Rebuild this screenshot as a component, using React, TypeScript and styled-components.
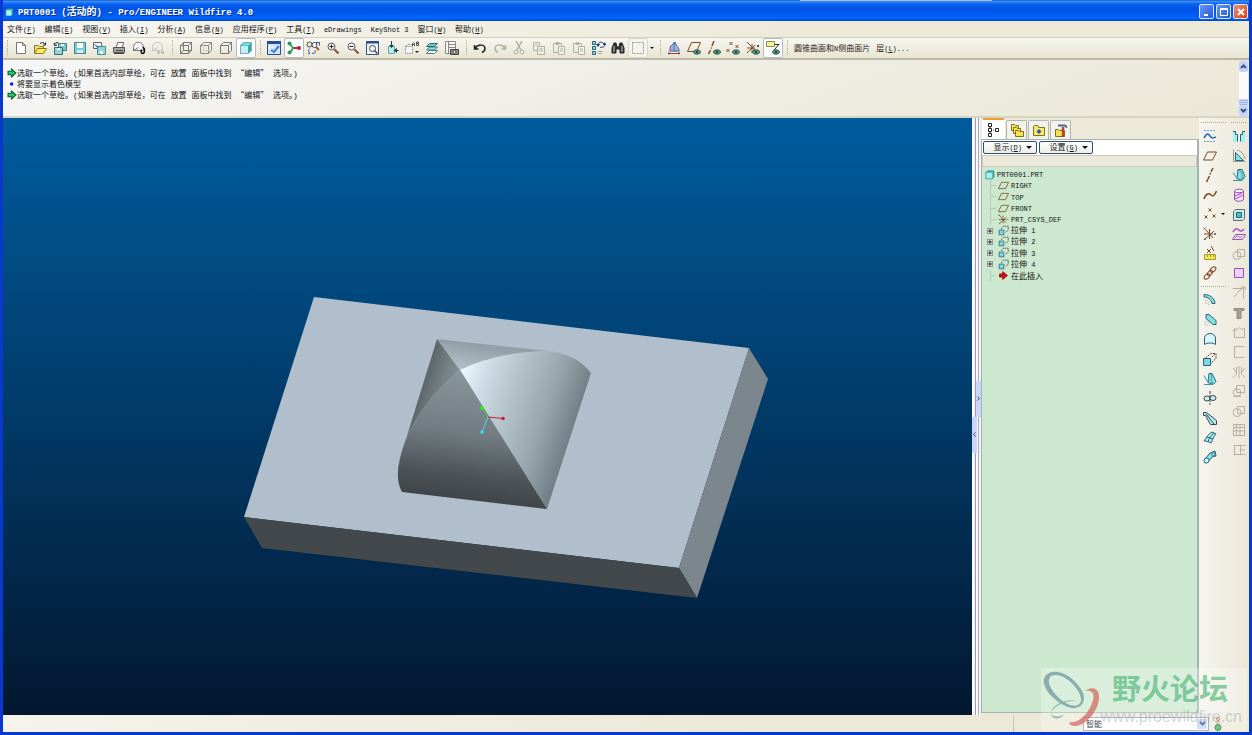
import React, { Fragment, ReactNode } from "react";
import styled, { createGlobalStyle, css } from "styled-components";

const uiFont = `"Noto Sans CJK SC", "Liberation Sans", sans-serif`;
const monoFont = `"Liberation Mono", "Noto Sans CJK SC", monospace`;

const GlobalStyle = createGlobalStyle`
  *, *::before, *::after { box-sizing: border-box; }
  body { margin: 0; font: 8px/11px ${uiFont}; color: #111; }
  button { font: inherit; color: inherit; padding: 0; margin: 0; border: 0; background: none; }
  ul { list-style: none; margin: 0; padding: 0; }
`;

/* ---------- text ---------- */

const Latin = styled.span<{ $size: number }>`
  font-family: ${monoFont};
  font-size: ${(p) => p.$size}px;
  white-space: pre;
`;

function Mixed({ text, size = 7 }: { text: string; size?: number }) {
  return (
    <>
      {text.split(/([\x20-\x7e]+)/).map((part, i) =>
        i % 2 ? (
          <Latin key={i} $size={size}>
            {part}
          </Latin>
        ) : (
          <Fragment key={i}>{part}</Fragment>
        )
      )}
    </>
  );
}

function Mnemonic({ text, letter }: { text: string; letter?: string }) {
  return (
    <>
      <Mixed text={text} />
      {letter && (
        <Latin $size={7}>
          (<u>{letter}</u>)
        </Latin>
      )}
    </>
  );
}

/* ---------- icons, drawn on a 14 x 14 grid ---------- */

const teal = "#7fe3e3";
const ink = "#2b6478";
const brown = "#7b4a22";
const grey = "#b4b1a4";
const purple = "#a04cc0";

const cross = (x: number, y: number, r = 1.5) => `M${x - r} ${y - r}l${2 * r} ${2 * r}m0 ${-2 * r}l${-2 * r} ${2 * r}`;

const floppy = (
  <>
    <rect x="1.5" y="1.5" width="11" height="11" fill="#7cc9cf" stroke="#3f8f99" />
    <rect x="4" y="2" width="6" height="5" fill="#fff" stroke="none" />
    <rect x="4" y="9" width="6" height="3" fill="#d7eff0" stroke="none" />
  </>
);
const cube = <path d="M1.500 4.500h8v8h-8zM1.500 4.500l3-3h8l-3 3M12.500 1.500v8l-3 3" />;
const lens = (
  <>
    <circle cx="5.500" cy="5.500" r="3.500" fill="#f8f8f8" stroke="#555" />
    <path d="M8.500 8.500l4 4" stroke="#8a4a3a" strokeWidth="2" />
  </>
);
const eye = (
  <>
    <ellipse cx="10" cy="11" rx="3.500" ry="2.200" fill="#5aa08a" stroke="#2f5a50" />
    <circle cx="10" cy="11" r="1" fill="#123" stroke="none" />
  </>
);
const clipboard = (
  <>
    <path d="M1.500 2.500h8v9h-8zM4 1.500h3v2H4z" stroke={grey} />
    <path d="M6.500 5.500h6v8h-6zM8 8h3M8 10h3" fill="#f3f1e8" stroke={grey} />
  </>
);

const icons: Record<string, ReactNode> = {
  part: (
    <>
      <path d="M2.500 4.500l2-2h8v8l-2 2h-8z" fill="#4fc4cc" stroke="#256a78" />
      <path d="M3 5h7v7H3z" fill="#a8f2f2" stroke="none" />
    </>
  ),
  file: <path d="M2.500 1.500h6l3 3v8h-9zM8.500 1.500v3h3" fill="#fff" stroke="#777" />,
  open: (
    <>
      <path d="M1.500 12.500v-8h4l1 1h4v2" fill="#f3e27a" stroke="#8a7a20" />
      <path d="M1.500 12.500l3-5h9l-3 5z" fill="#ffe95e" stroke="#8a7a20" />
      <path d="M7 2.500c2-1.500 4-1 5 1m.5-2v2.500h-2.500" stroke="#222" />
    </>
  ),
  backup: (
    <>
      <path d="M5.500 2.500h8v7h-8z" fill="#7cc9cf" stroke="#3f7f8a" />
      <path d="M1.500 6.500h8v7h-8z" fill="#8ed6da" stroke="#2f6f7a" />
      <path d="M4 7h3v2H4zM8 3h3v2H8z" fill="#fff" stroke="none" />
      <path d="M1.500 4c0-2 2-3 4-2M1 2l.5 2.500L4 4" stroke="#222" />
    </>
  ),
  save: floppy,
  saveAs: (
    <>
      <path d="M1.500 1.500h8v6h-8z" fill="#eef" stroke="#666" />
      <path d="M5.500 5.500h8v8h-8z" fill="#8ed6da" stroke="#3f8f99" />
      <path d="M8 10h3v3H8z" fill="#fff" stroke="none" />
      <path d="M3 3.500l3 3" stroke="#222" />
    </>
  ),
  print: (
    <>
      <path d="M4.500 6l1-4.500h6L10.500 6" fill="#fff" stroke="#666" />
      <path d="M1.500 6.500h11v5h-11z" fill="#a9a7a0" stroke="#555" />
      <path d="M2 12.500h10M4 9.500h7" stroke="#444" />
    </>
  ),
  mail: (
    <>
      <path d="M1.500 9.500v-3c0-7 10-7 10 0v3h-10l5-3" fill="#f8f8f8" stroke="#777" />
      <path d="M10.500 6.500c2 0 2 2 2 3s0 3-2 3-1-4-1-4" stroke="#111" strokeWidth="1.500" />
    </>
  ),
  mailLink: (
    <>
      <path d="M1.500 9.500v-3c0-7 10-7 10 0v3h-10l5-3" stroke="#c6c3b8" />
      <path d="M6 11.500h3m1 0h3" stroke={grey} strokeWidth="2" />
    </>
  ),
  wire: (
    <g stroke="#777">
      {cube}
      <path d="M4.500 1.500v8h8M4.500 9.500l-3 3" />
    </g>
  ),
  hidden: (
    <g stroke="#888">
      {cube}
      <path d="M4.500 1.500v8h8M4.500 9.500l-3 3" stroke="#ccc" />
    </g>
  ),
  noHidden: <g stroke="#777">{cube}</g>,
  shaded: (
    <>
      <path d="M1.500 4.500l3-3h8v8l-3 3h-8z" fill="#36a5b0" stroke="#7ab" />
      <path d="M2 5h7v7H2z" fill="#c5f0f0" stroke="none" />
      <path d="M2 4.500l3-2.500h7L9.500 4.500z" fill="#7fdede" stroke="none" />
    </>
  ),
  repaint: (
    <>
      <path d="M0.500 0.500h13v13h-13z" fill="#cfe4fb" stroke="#2c4f86" />
      <path d="M0 0h14v3H0z" fill="#274f94" stroke="none" />
      <path d="M2 6h5M2 8h2" stroke="#fff" />
      <path d="M12 5l-5 6-3-2" stroke="#3b7dd0" strokeWidth="2" />
    </>
  ),
  spin: (
    <>
      <path d="M6 7h6" stroke="#a33" strokeWidth="2" />
      <path d="M6 7L3 3M6 7l-3 5" stroke="#3a6" strokeWidth="2" />
      <g stroke="none">
        <circle cx="2.500" cy="2.500" r="2" fill="#2a9a50" />
        <circle cx="2.500" cy="11.500" r="2" fill="#2a9a50" />
        <circle cx="12" cy="7" r="2" fill="#b02a3a" />
      </g>
    </>
  ),
  orient: (
    <>
      <circle cx="3.500" cy="3.500" r="2.500" stroke="#444" />
      <circle cx="8.500" cy="4" r="2.500" fill="#fff" stroke="#444" />
      <path d="M10 6l3 3" stroke="#946038" strokeWidth="2" />
      <path d="M10 1.500h3.500v3M4 8c-2 0-2 3 0 4l-2 1M6 12c3 1 4-1 3-3" stroke="#3050b0" />
    </>
  ),
  zoomIn: (
    <>
      {lens}
      <path d="M3.500 5.500h4M5.500 3.500v4" stroke="#222" />
    </>
  ),
  zoomOut: (
    <>
      {lens}
      <path d="M3.500 5.500h4" stroke="#222" />
    </>
  ),
  refit: (
    <>
      <path d="M0.500 0.500h12v13h-12z" fill="#eef5fb" stroke="#34507c" />
      <path d="M0 1.500h13" stroke="#274f94" strokeWidth="2" />
      <circle cx="6.500" cy="7.500" r="3" stroke="#444" />
      <path d="M8.500 9.500l3 3" stroke="#444" strokeWidth="1.500" />
    </>
  ),
  reorient: (
    <>
      <path d="M2.500 5.500h6v7h-6z" fill="#b8ecec" stroke="#6aa" />
      <path d="M5.500 0v5M11 9.500H8" stroke="#14424c" />
      <path d="M3 4h5L5.500 7zM11 7v5L7.500 9.500z" fill="#14424c" stroke="none" />
      <path d="M12.500 9.500H11" stroke="#14424c" />
    </>
  ),
  views: (
    <>
      <path d="M0.500 5.500h7v7h-7zM0.500 5.500l2-2h5" fill="#f4f4f4" stroke="#8a9aa4" strokeDasharray="2 1" />
      <path d="M7.500 5V2.500l1-1 1 1V5M7.500 3.500h2M11.500 1v3.500h2V1h-2M11.500 2.500h2" stroke="#555" />
      <path d="M10 10h4l-2 2z" fill="#222" stroke="none" />
    </>
  ),
  layers: (
    <>
      <path d="M1.500 12.500l3-3h8l-3 3z" fill="#fff" stroke="#4a7a84" />
      <path d="M1.500 9l3-3h8l-3 3z" fill="#8fe0de" stroke="#3a7a84" />
      <path d="M1.500 5.500l3-3h8l-3 3z" fill="#6ccaca" stroke="#2f6a74" />
    </>
  ),
  viewManager: (
    <>
      <path d="M0.500 0.500h10v12h-10zM3.500 0.500v12M3.500 3.500h7M3.500 6.500h7" fill="#f6f6f4" stroke="#888" />
      <path d="M5.500 8.500h8v5h-8z" fill="#888" stroke="#444" />
      <circle cx="9.500" cy="11" r="1.500" fill="#eee" />
    </>
  ),
  undo: <path d="M1.500 4v4h4M2 7.500c3-5 10-4 10 0 0 2-1 3-3 4" stroke="#222" strokeWidth="1.500" />,
  redo: <path d="M12.500 4v4h-4M12 7.500c-3-5-10-4-10 0 0 2 1 3 3 4" stroke={grey} strokeWidth="1.500" />,
  cut: (
    <g stroke={grey}>
      <path d="M4 0l5 9M10 0L5 9" strokeWidth="1.500" />
      <circle cx="4" cy="11" r="2" />
      <circle cx="10" cy="11" r="2" />
    </g>
  ),
  copy: (
    <g stroke={grey} fill="#f0eee4">
      <path d="M1.500 1.500h6v8h-6zM3 4h3" />
      <path d="M5.500 5.500h7v8h-7zM7 8h4M7 10h4" />
    </g>
  ),
  paste: clipboard,
  pasteSpecial: clipboard,
  regenerate: (
    <>
      <path d="M0.500 0.500h3v3h-3zM0.500 5.500h3v3h-3zM0.500 10.500h3v3h-3z" fill={teal} stroke={ink} />
      <path d="M6 4c0-3 4-4 6-1M13 3c0 3-3 4-5 3" stroke="#1b2f78" />
      <path d="M4 3h4L6 6zM11 4h3l-1-3z" fill="#1b2f78" stroke="none" />
      <path d="M6 10.500h5M6 12.500h4" stroke="#aaa" />
    </>
  ),
  find: (
    <>
      <path d="M1 7l2-5h2l1 4h2l1-4h2l2 5v5H9V8H5v4H1z" fill="#333" stroke="#222" />
      <path d="M3 5v6M11 5v6" stroke="#ccc" />
    </>
  ),
  select: <path d="M1.500 1.500h11v11h-11z" stroke="#999" strokeDasharray="2 1" />,
  datumSketch: (
    <>
      <path d="M3 10V6l5-5 3 9z" fill="#b4a4e4" stroke="#6a50a0" />
      <path d="M7 10V1l5 7v2z" fill="#86c4e4" stroke="#47a" />
      <path d="M1 12.500h12M2 10.500v3M12 10.500v3" stroke="#9a3a3a" />
    </>
  ),
  planeEye: (
    <>
      <path d="M4.500 1.500h9l-4 9h-9z" stroke={brown} />
      {eye}
    </>
  ),
  axisEye: (
    <>
      <path d="M7 0L5 5M4.500 6.500l-.5 1M3.500 9l-2 4" stroke={brown} strokeWidth="1.500" />
      {eye}
    </>
  ),
  pointEye: (
    <>
      <path d={cross(5, 2.5) + cross(11, 5.5) + cross(2, 9.5)} stroke={brown} />
      {eye}
    </>
  ),
  csysEye: (
    <>
      <path d="M1 1l9 9M6 3v9M1 12l8-8M1 7h8" stroke={brown} />
      <path d={cross(12, 5, 1)} stroke="#555" />
      {eye}
    </>
  ),
  noteEye: (
    <>
      <path d="M0.500 0.500h8v5h-8z" fill="#f8f09a" stroke="#8f8a4a" />
      <path d="M9 3.500h4L8 9" stroke="#222" />
      {eye}
    </>
  ),
  tree: <path d="M1.500 0.500h3v3h-3zM1.500 5.500h3v3h-3zM1.500 10.500h3v3h-3zM8.500 5.500h3v3h-3zM3 4v1M3 9v1M6 7h1" stroke="#222" fill="#fff" />,
  folders: (
    <g fill="#f5e352" stroke="#7d7320">
      <path d="M1.500 2.500v-1h3l1 1h3v5h-7z" />
      <path d="M3.500 5.500v-1h3l1 1h3v5h-7z" />
      <path d="M5.500 8.500v-1h3l1 1h4v5h-8z" />
    </g>
  ),
  favorites: (
    <>
      <path d="M1.500 12.500v-9l1-1h3l1 2h6v8z" fill="#f7ea66" stroke="#7d7320" />
      <path d="M7 6l2.500 2.500L7 11 4.500 8.500z" fill="#2a55b0" stroke="none" />
    </>
  ),
  connections: (
    <>
      <path d="M1.500 13.500v-7h3l1 1h5v6z" fill="#f5e352" stroke="#7d7320" />
      <path d="M4 2.500h7l2 2" stroke="#4a6a90" strokeWidth="2" />
      <path d="M9 4v10" stroke="#b04a2a" strokeWidth="2.500" />
    </>
  ),
  sketch: (
    <>
      <path d="M1 1.500h12M1 12.500h12" stroke="#6aa0d0" strokeDasharray="2 1" />
      <path d="M1 9c3-5 4-5 6-2s3 2 6 1" stroke="#2463c0" strokeWidth="1.500" />
    </>
  ),
  plane: <path d="M4.500 3h9l-4 8h-9z" stroke={brown} />,
  axis: <path d="M10 0L8 4M7.500 5l-.5 1.500M6.500 8L3.500 14" stroke={brown} strokeWidth="1.500" />,
  curve: <path d="M1 11c2-6 5-6 7-4s4 0 5.500-4" stroke={brown} strokeWidth="1.500" />,
  points: <path d={cross(7, 3) + cross(3, 10) + cross(11, 9)} stroke={brown} />,
  csys: (
    <>
      <path d="M2 2l8 9M6.500 2v10M2 12l9-8M1 7h9" stroke={brown} />
      <path d={cross(12, 7, 1) + cross(1.5, 1.5, 1) + cross(2, 12, 1)} stroke="#777" />
    </>
  ),
  analysis: (
    <>
      <path d={"M8 0l3 5" + cross(6, 5, 2)} stroke={brown} />
      <path d="M1.500 8.500h11v5h-11z" fill="#f2e860" stroke="#a79a20" />
      <path d="M4.500 9v2M7.500 9v2M10.500 9v2" stroke="#a79a20" />
    </>
  ),
  reference: (
    <g stroke={brown}>
      <ellipse cx="10" cy="3.500" rx="3.300" ry="2" transform="rotate(-40 10 3.500)" />
      <ellipse cx="7" cy="7" rx="3" ry="2" transform="rotate(-50 7 7)" />
      <ellipse cx="4" cy="10.500" rx="3.300" ry="2" transform="rotate(-40 4 10.500)" />
    </g>
  ),
  hole: (
    <>
      <path d="M1 2h12v11H1z" fill="#a4f0ee" stroke="none" />
      <path d="M3.500 2v3.500h2V13h3V5.500h2V2z" fill="#f2f0e6" stroke="none" />
      <path d="M1 2.500h2.500v3h2v7M13 2.500h-2.500v3h-2v7" stroke={ink} />
    </>
  ),
  rib: (
    <>
      <path d="M3.500 3.500v8h8z" fill={teal} stroke={ink} />
      <path d="M1.500 0.500v12h12M5 1c4 1 7 4 8 9" stroke="#999" />
    </>
  ),
  draftSolid: (
    <>
      <path d="M5 10.500l1-9h4l3 7-3 4z" fill={teal} stroke={ink} />
      <path d="M6 1.500l4 3v8M1 4.500l4 6M1 12.500h9" stroke="#389aa8" />
    </>
  ),
  rib2: (
    <>
      <path d="M2.500 3v8c0 3 9 3 9 0V3" fill="#f6e4fb" stroke={purple} />
      <ellipse cx="7" cy="3" rx="4.500" ry="1.800" fill="#fff" stroke={purple} />
      <path d="M3 8l7-3M3 11l8-4" stroke={purple} />
    </>
  ),
  shell: (
    <>
      <path d="M1.500 3.500l2-2h9v9l-2 2h-9z" fill="#c6eeee" stroke="#667" />
      <path d="M4.500 4.500h5v5h-5z" fill="#56b8c0" stroke={ink} />
    </>
  ),
  wrap: (
    <>
      <path d="M1 5c2-4 4-4 6-2s3 1 5-1" stroke={purple} strokeWidth="1.500" />
      <path d="M0.500 12.500l3-5h10l-3 5zM3 11c2-3 3-2 4-1s2 0 3-1" stroke={purple} />
    </>
  ),
  intersectOff: (
    <g stroke={grey}>
      <circle cx="5" cy="8.500" r="4" />
      <path d="M5.500 2.500h7v7h-7z" />
    </g>
  ),
  square: <path d="M2.500 2.500h9v9h-9z" fill="#ecd4f6" stroke={purple} />,
  cornerOff: <path d="M0.500 2.500h11v10M5 7l7-6M2 11l3-3M9 1h4v3" stroke={grey} />,
  rivet: <path d="M2 2.500h10v2H9v8H5v-8H2z" fill="#a19f96" stroke="#8e8c82" />,
  patchOff: <path d="M2.500 12.500v-9l3 1 2-2 2 2 3-1v9zM0.500 5.500h3" stroke={grey} />,
  bracketOff: <path d="M12 1.500H2.500v11H12" stroke={grey} />,
  mirrorOff: <path d="M7 1v12M4.500 2v7L1 12.500M9.500 2v7l3.500 3.500M1 3l3 4M13 3l-3 4" stroke={grey} />,
  mergeOff: (
    <g stroke={grey}>
      <circle cx="5" cy="8.500" r="3.800" />
      <path d="M4.500 1.500h8v7h-8zM2 12.500h7" />
    </g>
  ),
  gridOff: <path d="M1.500 1.500h11v11h-11zM1.500 4.500h11M1.500 8h11M4.500 1.500v11M8 1.500v11" stroke={grey} />,
  panelOff: <path d="M1.500 2.500h12M1.500 11.500h12M2.500 2.500v9M8.500 2.500v9M9 7h4" stroke={grey} />,
  sweep: (
    <>
      <path d="M1 1.500c6 0 11 4 11 9h-3C8 6 5 4 1 4z" fill={teal} stroke={ink} />
      <path d="M2 7c3 0 4 2 4 5M2 9c1 0 2 1 2 3" stroke="#aaa" strokeDasharray="1 1" />
    </>
  ),
  chamfer: (
    <>
      <path d="M3 1.500h3l7 6v4h-3l-7-6z" fill={teal} stroke={ink} />
      <path d="M2 8v4h5M4 8l3 3" stroke="#aaa" strokeDasharray="1 1" />
    </>
  ),
  surface: <path d="M1.500 12.500V6C2 0 12 0 12.500 6v6.500c-3-2-8-2-11 0z" fill="#d9f6fa" stroke={ink} />,
  extrude: (
    <>
      <path d="M0.500 6.500h7v7h-7z" fill="#7fd8e0" stroke={ink} />
      <path d="M2.500 6L8 1.500h5v5L8 11M9 5l3-3" stroke="#444" strokeDasharray="2 1" />
    </>
  ),
  revolve: (
    <>
      <path d="M5 10.500l1-9h3l4 8-3 3z" fill={teal} stroke={ink} />
      <path d="M1 3.500l4 7M1 12.500h9M9 1.500l-1 7 2 4" stroke="#389aa8" />
    </>
  ),
  sweepBlend: (
    <>
      <ellipse cx="4" cy="7.500" rx="3" ry="2.500" fill="#c8f2f2" stroke="#444" />
      <ellipse cx="10" cy="7" rx="3" ry="2.500" fill="#c8f2f2" stroke="#444" />
      <path d="M7 0v14" stroke="#444" strokeDasharray="3 1" />
    </>
  ),
  blend: <path d="M0.500 1.500h3l10 8v4h-6l-5-9h-2zM3 3l8 10" fill="#b5ecec" stroke="#345" />,
  boundary: (
    <>
      <path d="M1 11c3-4 4-7 8-9l4 2c-3 3-3 6-5 9-2-1-4-2-7-2z" fill="#a9ecee" stroke={ink} />
      <path d="M4 7l6 2M5 12c1-4 3-6 6-9" stroke={ink} />
    </>
  ),
  sweptSolid: (
    <>
      <path d="M2 9l5-6 5-2 1 5-4 1-4 5-3 1z" fill={teal} stroke={ink} />
      <circle cx="3.500" cy="10.500" r="2.500" fill="#cff" stroke={ink} />
      <circle cx="10.500" cy="4" r="1.500" fill="#fff" stroke={ink} />
    </>
  ),
  feature: (
    <>
      <path d="M1.500 6.500h6v6h-6z" fill="#7fd8e0" stroke={ink} />
      <path d="M4 5l3-3.500h6v5L10 9" stroke="#333" strokeDasharray="2 1" />
    </>
  ),
  insert: <path d="M2 5h4V2l6 5-6 5V9H2z" fill="#d01020" stroke="#900" />,
  arrow: <path d="M1.500 4.500h5V1.500l6 5.500-6 5.500v-3h-5z" fill="#27c96a" stroke="#0b5c2c" strokeWidth="1.500" />,
  dot: <circle cx="6.500" cy="7" r="2.500" fill="#1a1ae0" stroke="none" />,
  light: (
    <>
      <circle cx="7" cy="2" r="1.500" fill="#eea" stroke="#b66" />
      <circle cx="7" cy="5.500" r="1.500" fill="#eec" stroke="#b98" />
      <circle cx="7" cy="10.500" r="3" fill="#39b45c" stroke="#1c6a34" />
    </>
  ),
};

const Glyph = styled.svg<{ $size: number }>`
  width: ${(p) => p.$size}px;
  height: ${(p) => p.$size}px;
  flex: none;
  display: block;
`;

function Icon({ name, size = 14 }: { name: string; size?: number }) {
  return (
    <Glyph $size={size} viewBox="0 0 14 14" fill="none" stroke="#555" aria-hidden="true">
      {icons[name]}
    </Glyph>
  );
}

/* ---------- window frame ---------- */

const Window = styled.div`
  position: relative;
  display: flex;
  flex-direction: column;
  height: 100vh;
  overflow: hidden;
  border: solid #0838cc;
  border-width: 0 3px 3px;
  background: #ece9d8;
`;

const TitleBar = styled.header`
  position: relative;
  flex: none;
  display: flex;
  align-items: center;
  gap: 4px;
  height: 21px;
  padding: 2px 1px 0 1px;
  color: #fff;
  font-size: 10px;
  font-weight: 700;
  white-space: nowrap;
  background: linear-gradient(#0a4fa8 0, #3d92ff 1px, #0a64f0 4px, #0054e3 8px, #0058ee 13px, #0066ff 18px, #0048c8 21px);
`;

const BackEdge = styled.span`
  position: absolute;
  top: 0;
  left: 64%;
  width: 192px;
  height: 1px;
  background: #a9bccb;
`;

const Title = styled.h1`
  flex: 1;
  margin: 0;
  font-size: 10px;
  text-shadow: 1px 1px #0a318c;
`;

const Captions = styled.div`
  display: flex;
  gap: 2px;
`;

const CaptionButton = styled.button<{ $close?: boolean }>`
  display: grid;
  place-items: center;
  width: 15px;
  height: 15px;
  border: 1px solid #dbe6ff;
  border-radius: 2px;
  background: ${(p) => (p.$close ? "linear-gradient(135deg, #f09070, #d8401a)" : "linear-gradient(135deg, #6a96f4, #2256d8)")};
`;

/* ---------- menus and top toolbar ---------- */

const MenuBar = styled.nav`
  flex: none;
  display: flex;
  align-items: center;
  gap: 9px;
  height: 16px;
  padding: 0 4px;
  white-space: nowrap;
  background: linear-gradient(90deg, #f6f5f0, #ece9d8 70%);
`;

const ToolBar = styled.div`
  flex: none;
  display: flex;
  align-items: center;
  height: 23px;
  border-top: 1px solid #d3cfbe;
  border-bottom: 2px solid #bdb9a6;
  white-space: nowrap;
  background: linear-gradient(#f7f6f0, #e8e5d3);
`;

const Grip = styled.span`
  flex: none;
  width: 3px;
  height: 16px;
  margin: 0 2px 0 3px;
  background: repeating-linear-gradient(#aaa793 0 1px, transparent 1px 2px) 1px 0 / 1px 100% no-repeat;
`;

const Group = styled.div<{ $width: number }>`
  flex: none;
  display: flex;
  justify-content: space-between;
  width: ${(p) => p.$width}px;
`;

const ToolButton = styled.button<{ $look?: "on" | "framed" }>`
  display: grid;
  place-items: center;
  width: 20px;
  height: 20px;
  border: 1px solid transparent;
  border-radius: 2px;
  ${(p) => p.$look === "on" && css`border-color: #b3bac6; background: #fff;`}
  ${(p) => p.$look === "framed" && css`border-color: #dcd9cb; background: #f4f3ec;`}
`;

const Drop = styled.button`
  width: 8px;
  height: 18px;
  display: grid;
  place-items: center;
`;

const Caret = styled.i`
  border: solid transparent;
  border-width: 3px 3px 0;
  border-top-color: #111;
`;

const SmallCaret = styled(Caret)`
  border-width: 2px 2px 0;
`;

const TextButton = styled.button`
  padding: 0 3px;
  color: #2b1512;
`;

/* ---------- message area ---------- */

const Messages = styled.section`
  flex: none;
  display: flex;
  height: 58px;
  border-bottom: 2px solid #d8d4c2;
  background: linear-gradient(160deg, #f6f6f6, #efeee6 50%, #ebe8d6);
`;

const MessageList = styled.ul`
  flex: 1;
  padding: 7px 4px;
`;

const Message = styled.li`
  display: flex;
  align-items: center;
  height: 11px;
  white-space: nowrap;
`;

const Scroller = styled.div`
  display: flex;
  flex-direction: column;
  width: 9px;
  margin: 1px 1px 0 0;
  background: #fbfbfc;
`;

const ScrollButton = styled.button<{ $flip?: boolean }>`
  display: grid;
  place-items: center;
  height: 11px;
  border-radius: 2px;
  background: #c5d3f8;
  svg { transform: ${(p) => (p.$flip ? "scaleY(-1)" : "none")}; }
`;

const ScrollThumb = styled.span`
  height: 6px;
  margin-top: auto;
  border-radius: 1px;
  background: repeating-linear-gradient(#c9d7fb 0 1px, #9fb5ea 1px 2px);
`;

/* ---------- work area ---------- */

const Work = styled.main`
  flex: 1;
  display: flex;
  min-height: 0;
`;

const Viewport = styled.section`
  flex: 1;
  display: flex;
  min-width: 0;
  background: linear-gradient(#005c9e, #031730);
  svg { flex: 1; min-width: 0; height: 100%; }
`;

const Splitter = styled.div`
  flex: none;
  display: flex;
  align-items: center;
  width: 9px;
  background: linear-gradient(90deg, #fff 0 2px, #f0eee4 2px 3px, #9d9cd2 3px 4px, #fbfaf4 4px 6px, #a8a7d8 6px 7px, #f4f2ec 7px 9px);
`;

const Handle = styled.button<{ $side: "left" | "right" }>`
  display: grid;
  place-items: center;
  width: 5px;
  height: 36px;
  flex: none;
  background: #cbd5fa;
  margin-top: ${(p) => (p.$side === "left" ? 36 : -36)}px;
  margin-left: ${(p) => (p.$side === "left" ? 0 : -1)}px;
`;

const Navigator = styled.aside`
  flex: none;
  display: flex;
  flex-direction: column;
  width: 218px;
`;

const Tabs = styled.div`
  display: flex;
  align-items: flex-end;
  gap: 1px;
  height: 21px;
  padding-left: 1px;
`;

const Tab = styled.button<{ $active?: boolean }>`
  display: grid;
  place-items: center;
  width: ${(p) => (p.$active ? 23 : 21)}px;
  height: ${(p) => (p.$active ? 21 : 19)}px;
  border: 1px solid #b4b6b4;
  border-bottom: 0;
  border-radius: 2px 2px 0 0;
  background: ${(p) => (p.$active ? "#fff" : "#f3f2ea")};
  ${(p) => p.$active && css`border-color: #fff; border-top: 2px solid #f0a030;`}
`;

const TreeFrame = styled.div`
  flex: 1;
  display: flex;
  flex-direction: column;
  min-height: 0;
  border: 1px solid #a5b4b2;
  border-right-width: 2px;
  margin-bottom: 2px;
`;

const TreeActions = styled.div`
  display: flex;
  gap: 2px;
  height: 15px;
  padding: 1px;
  background: #fff;
`;

const TreeAction = styled.button`
  display: flex;
  align-items: center;
  justify-content: flex-end;
  gap: 4px;
  width: 54px;
  height: 13px;
  padding-right: 4px;
  border: 1px solid #2f4f74;
  border-radius: 2px;
  background: linear-gradient(#fff, #efeee6);
`;

const TreeHeader = styled.div`
  height: 12px;
  border: 1px solid #cfcbb8;
  background: #ebe9d9;
`;

const TreeBody = styled.div`
  flex: 1;
  padding: 2px;
  background: #cce8cf;
`;

const TreeList = styled.ul`
  display: grid;
  grid-template-rows: repeat(10, minmax(0, 1fr));
  height: 112px;
`;

const TreeRow = styled.li<{ $root?: boolean }>`
  display: flex;
  align-items: center;
  gap: 2px;
  min-height: 0;
  padding-left: ${(p) => (p.$root ? 0 : 3)}px;
  white-space: nowrap;
`;

const Branch = styled.span`
  width: 9px;
  align-self: stretch;
  background:
    linear-gradient(#b9cdb5, #b9cdb5) 3px 0 / 1px 100% no-repeat,
    linear-gradient(#b9cdb5, #b9cdb5) 3px 5px / 6px 1px no-repeat;
`;

const Expander = styled.button`
  display: grid;
  place-items: center;
  width: 6px;
  height: 6px;
  margin-right: 3px;
  border: 1px solid #8a9a9a;
  background: #f4f8f4;
`;

const SideTools = styled.aside`
  flex: none;
  display: flex;
  gap: 4px;
  width: 50px;
  padding: 3px 1px 0 2px;
  background: linear-gradient(90deg, #f5f4ee, #ebe8d8);
`;

const SideColumn = styled.div<{ $wide?: boolean }>`
  width: ${(p) => (p.$wide ? 26 : 16)}px;
  flex: none;
`;

const SideGrip = styled.span`
  display: block;
  height: 3px;
  background: repeating-linear-gradient(90deg, #aaa793 0 1px, transparent 1px 2px) 0 1px / 100% 1px no-repeat;
`;

const SideGroup = styled.div<{ $height: number }>`
  display: flex;
  flex-direction: column;
  justify-content: space-between;
  height: ${(p) => p.$height}px;
  margin: 3px 0;
`;

const SideRow = styled.div`
  display: flex;
  align-items: center;
  height: 18px;
`;

const SideButton = styled.button`
  display: grid;
  place-items: center;
  width: 18px;
  height: 18px;
`;

/* ---------- status bar and watermark ---------- */

const StatusBar = styled.footer`
  flex: none;
  display: flex;
  align-items: center;
  justify-content: flex-end;
  height: 17px;
  background: linear-gradient(90deg, #f4f3ec, #ece9d8 60%);
`;

const StatusCell = styled.div`
  display: flex;
  align-items: center;
  justify-content: flex-end;
  gap: 2px;
  width: 236px;
  height: 17px;
  padding-right: 24px;
  border-left: 1px solid #c9c5b4;
`;

const FilterBox = styled.label`
  position: relative;
  display: flex;
`;

const Filter = styled.select`
  appearance: none;
  width: 126px;
  height: 14px;
  padding: 0 2px;
  border: 1px solid #8ba0b6;
  border-radius: 0;
  font: 8px/11px ${uiFont};
  color: #000;
  background: #fff;
`;

const FilterArrow = styled.span`
  position: absolute;
  right: 2px;
  top: 2px;
  display: grid;
  place-items: center;
  width: 10px;
  height: 10px;
  background: #c5d3f8;
  pointer-events: none;
`;

const Watermark = styled.div`
  position: absolute;
  right: 2px;
  bottom: 1px;
  width: 206px;
  height: 63px;
  background: rgba(255, 255, 255, 0.25);
  pointer-events: none;
`;

const WatermarkLogo = styled.svg`
  position: absolute;
  left: 0;
  top: 0;
  width: 64px;
  height: 63px;
`;

const WatermarkName = styled.strong`
  position: absolute;
  right: 19px;
  top: 1px;
  font: 700 29px/36px ${uiFont};
  color: rgba(70, 180, 115, 0.65);
`;

const WatermarkUrl = styled.span`
  position: absolute;
  right: 5px;
  top: 40px;
  font: 16px/18px "Liberation Sans", sans-serif;
  color: rgba(120, 140, 150, 0.35);
`;

/* ---------- data ---------- */

const menus: [string, string?][] = [
  ["文件", "F"], ["编辑", "E"], ["视图", "V"], ["插入", "I"], ["分析", "A"], ["信息", "N"],
  ["应用程序", "P"], ["工具", "T"], ["eDrawings"], ["KeyShot 3"], ["窗口", "W"], ["帮助", "H"],
];

const toolGroups: { width: number; tools: string[]; drop?: boolean }[] = [
  { width: 157, tools: ["file", "open", "backup", "save", "saveAs", "print", "mail", "mailLink"] },
  { width: 80, tools: ["wire", "hidden", "noHidden", "shaded"] },
  { width: 198, tools: ["repaint", "spin", "orient", "zoomIn", "zoomOut", "refit", "reorient", "views", "layers", "viewManager"] },
  { width: 178, tools: ["undo", "redo", "cut", "copy", "paste", "pasteSpecial", "regenerate", "find", "select"], drop: true },
  { width: 119, tools: ["datumSketch", "planeEye", "axisEye", "pointEye", "csysEye", "noteEye"] },
];

const looks: Record<string, "on" | "framed"> = { shaded: "on", spin: "on", noteEye: "on", select: "framed" };

const hint = "选取一个草绘。(如果首选内部草绘，可在 放置 面板中找到 “编辑” 选项。)";
const messages = [
  { icon: "arrow", text: hint },
  { icon: "dot", text: "将要显示着色模型" },
  { icon: "arrow", text: hint },
];

const treeRows = [
  { icon: "plane", text: "RIGHT" },
  { icon: "plane", text: "TOP" },
  { icon: "plane", text: "FRONT" },
  { icon: "csys", text: "PRT_CSYS_DEF" },
  { icon: "feature", text: "拉伸 1", open: true },
  { icon: "feature", text: "拉伸 2", open: true },
  { icon: "feature", text: "拉伸 3", open: true },
  { icon: "feature", text: "拉伸 4", open: true },
  { icon: "insert", text: "在此插入" },
];

const datumTools = ["sketch", "plane", "axis", "curve", "points", "csys", "analysis", "reference"];
const shapeTools = ["sweep", "chamfer", "surface", "extrude", "revolve", "sweepBlend", "blend", "boundary", "sweptSolid"];
const editTools = [
  "hole", "rib", "draftSolid", "rib2", "shell", "wrap", "intersectOff", "square", "cornerOff", "rivet",
  "patchOff", "bracketOff", "mirrorOff", "mergeOff", "intersectOff", "gridOff", "panelOff",
];

/* ---------- the shaded model ---------- */

function Model() {
  return (
    <svg viewBox="3 118 969 597" role="img" aria-label="PRT0001">
      <defs>
        <linearGradient id="right" gradientUnits="userSpaceOnUse" x1="462" y1="372" x2="578" y2="412">
          <stop offset="0" stopColor="#e9faff" />
          <stop offset="0.180" stopColor="#d0dde6" />
          <stop offset="0.450" stopColor="#b3c1c9" />
          <stop offset="0.750" stopColor="#98a5ac" />
          <stop offset="1" stopColor="#738087" />
        </linearGradient>
        <linearGradient id="bottom" gradientUnits="userSpaceOnUse" x1="470" y1="375" x2="455" y2="500">
          <stop offset="0" stopColor="#87949a" />
          <stop offset="0.450" stopColor="#727d83" />
          <stop offset="0.800" stopColor="#4c5357" />
          <stop offset="1" stopColor="#3f4447" />
        </linearGradient>
        <linearGradient id="left" gradientUnits="userSpaceOnUse" x1="412" y1="385" x2="462" y2="402">
          <stop offset="0" stopColor="#50575b" />
          <stop offset="0.500" stopColor="#747e83" />
          <stop offset="1" stopColor="#929ea4" />
        </linearGradient>
        <linearGradient id="top" gradientUnits="userSpaceOnUse" x1="470" y1="344" x2="466" y2="372">
          <stop offset="0" stopColor="#929fa6" />
          <stop offset="1" stopColor="#b4c2cb" />
        </linearGradient>
      </defs>
      <path d="M314 297L749 348 679 568 244 517z" fill="#b0bfcb" />
      <path d="M749 348L768 379 697 598 679 568z" fill="#7b878d" />
      <path d="M244 517L679 568 697 598 262 548z" fill="#42484b" />
      <path d="M437 339L460 370Q422 402 406 439z" fill="url(#left)" />
      <path d="M437 339L548 351Q500 351 460 370z" fill="url(#top)" />
      <path d="M460 370Q500 351 552 351.500Q577 355 591 373L547 509z" fill="url(#right)" />
      <path d="M460 370L547 509 402 492Q392 475 406 439Q422 402 460 370z" fill="url(#bottom)" />
      <path d="M488 417L503 418.500" stroke="#d01840" />
      <path d="M488 417L482 432" stroke="#3fe0e4" />
      <path d="M488 417L482 408" stroke="#44d020" />
      <circle cx="503" cy="418.500" r="1.800" fill="#d01840" />
      <circle cx="482" cy="432" r="1.800" fill="#3fe0e4" />
      <circle cx="482" cy="408" r="2" fill="#2df018" />
    </svg>
  );
}

const chevron = (
  <svg width="7" height="5" viewBox="0 0 7 5" fill="none" stroke="#3a5288" strokeWidth="2" aria-hidden="true">
    <path d="M1 4l2.500-2.500L6 4" />
  </svg>
);

export default function App() {
  return (
    <Window>
      <GlobalStyle />
      <TitleBar>
        <BackEdge />
        <Icon name="part" size={10} />
        <Title>
          <Mixed text="PRT0001 (活动的) - Pro/ENGINEER Wildfire 4.0" size={9} />
        </Title>
        <Captions>
          <CaptionButton aria-label="最小化">
            <svg width="10" height="10" viewBox="0 0 10 10" fill="none" stroke="#fff" strokeWidth="2"><path d="M2 8h4" /></svg>
          </CaptionButton>
          <CaptionButton aria-label="最大化">
            <svg width="10" height="10" viewBox="0 0 10 10" fill="none" stroke="#fff"><path d="M1.500 1.500h7v7h-7zM1.500 2.500h7" /></svg>
          </CaptionButton>
          <CaptionButton $close aria-label="关闭">
            <svg width="10" height="10" viewBox="0 0 10 10" fill="none" stroke="#fff" strokeWidth="2"><path d="M2 2l6 6M8 2l-6 6" /></svg>
          </CaptionButton>
        </Captions>
      </TitleBar>

      <MenuBar>
        {menus.map(([text, letter]) => (
          <button key={text}>
            <Mnemonic text={text} letter={letter} />
          </button>
        ))}
      </MenuBar>

      <ToolBar>
        {toolGroups.map((group) => (
          <Fragment key={group.tools[0]}>
            <Grip />
            <Group $width={group.width}>
              {group.tools.map((name) => (
                <ToolButton key={name} $look={looks[name]} aria-label={name}>
                  <Icon name={name} />
                </ToolButton>
              ))}
            </Group>
            {group.drop && (
              <Drop aria-label="选取选项">
                <SmallCaret />
              </Drop>
            )}
          </Fragment>
        ))}
        <Grip />
        <TextButton><Mixed text="圆锥曲面和N侧曲面片" /></TextButton>
        <TextButton>
          <Mnemonic text="层" letter="L" />
          <Latin $size={7}>...</Latin>
        </TextButton>
      </ToolBar>

      <Messages>
        <MessageList>
          {messages.map((m, i) => (
            <Message key={i}>
              <Icon name={m.icon} size={10} />
              <span><Mixed text={m.text} size={8} /></span>
            </Message>
          ))}
        </MessageList>
        <Scroller>
          <ScrollButton aria-label="向上">{chevron}</ScrollButton>
          <ScrollThumb />
          <ScrollButton $flip aria-label="向下">{chevron}</ScrollButton>
        </Scroller>
      </Messages>

      <Work>
        <Viewport>
          <Model />
        </Viewport>
        <Splitter>
          <Handle $side="left" aria-label="展开">
            <svg width="3" height="5" viewBox="0 0 3 5" fill="none" stroke="#2b3f8c"><path d="M2.500.5l-2 2 2 2" /></svg>
          </Handle>
          <Handle $side="right" aria-label="收起">
            <svg width="3" height="5" viewBox="0 0 3 5" fill="none" stroke="#2b3f8c"><path d="M.5.5l2 2-2 2" /></svg>
          </Handle>
        </Splitter>
        <Navigator>
          <Tabs>
            <Tab $active aria-label="模型树"><Icon name="tree" /></Tab>
            <Tab aria-label="文件夹浏览器"><Icon name="folders" /></Tab>
            <Tab aria-label="收藏夹"><Icon name="favorites" /></Tab>
            <Tab aria-label="连接"><Icon name="connections" /></Tab>
          </Tabs>
          <TreeFrame>
            <TreeActions>
              <TreeAction><span><Mnemonic text="显示" letter="D" /></span><Caret /></TreeAction>
              <TreeAction><span><Mnemonic text="设置" letter="G" /></span><Caret /></TreeAction>
            </TreeActions>
            <TreeHeader />
            <TreeBody>
              <TreeList>
                <TreeRow $root>
                  <Icon name="part" size={11} />
                  <span><Mixed text="PRT0001.PRT" /></span>
                </TreeRow>
                {treeRows.map((row) => (
                  <TreeRow key={row.text}>
                    {row.open ? (
                      <Expander aria-label="展开">
                        <svg width="4" height="4" viewBox="0 0 4 4" stroke="#222"><path d="M0 2h4M2 0v4" /></svg>
                      </Expander>
                    ) : (
                      <Branch />
                    )}
                    <Icon name={row.icon} size={11} />
                    <span><Mixed text={row.text} /></span>
                  </TreeRow>
                ))}
              </TreeList>
            </TreeBody>
          </TreeFrame>
        </Navigator>
        <SideTools>
          <SideColumn $wide>
            <SideGrip />
            <SideGroup $height={155}>
              {datumTools.map((name) => (
                <SideRow key={name}>
                  <SideButton aria-label={name}><Icon name={name} /></SideButton>
                  {name === "points" && <Drop aria-label="基准点选项"><SmallCaret /></Drop>}
                </SideRow>
              ))}
            </SideGroup>
            <SideGrip />
            <SideGroup $height={175}>
              {shapeTools.map((name) => (
                <SideRow key={name}>
                  <SideButton aria-label={name}><Icon name={name} /></SideButton>
                </SideRow>
              ))}
            </SideGroup>
          </SideColumn>
          <SideColumn>
            <SideGrip />
            <SideGroup $height={332}>
              {editTools.map((name, i) => (
                <SideRow key={i}>
                  <SideButton aria-label={name}><Icon name={name} /></SideButton>
                </SideRow>
              ))}
            </SideGroup>
          </SideColumn>
        </SideTools>
      </Work>

      <StatusBar>
        <StatusCell>
          <FilterBox>
            <Filter aria-label="选取过滤器" defaultValue="智能">
              <option>智能</option>
            </Filter>
            <FilterArrow>
              <svg width="7" height="5" viewBox="0 0 7 5" fill="none" stroke="#3a5288" strokeWidth="2"><path d="M1 1l2.500 2.500L6 1" /></svg>
            </FilterArrow>
          </FilterBox>
          <Icon name="light" />
        </StatusCell>
      </StatusBar>

      <Watermark>
        <WatermarkLogo viewBox="0 0 64 63" aria-hidden="true">
          <path
            d="M8 5C20 0 36 12 42 25C46 36 37 43 27 39C14 34 1 21 3 11Q4 7 8 5zM10 8C5 12 9 22 19 31C28 39 38 40 40 33C41 24 30 12 20 8Q14 6 10 8z"
            fill="#6f97a0"
            fillOpacity="0.750"
            fillRule="evenodd"
          />
          <path d="M44 23C50 18 59 19 58 31C57 42 47 56 35 58C30 58 27 56 29 54C38 56 49 44 52 32C54 24 50 22 44 23z" fill="#d46a62" fillOpacity="0.750" />
          <path d="M36 32C24 33 10 40 10 45C11 50 19 48 23 47C18 52 11 52 10 46C9 37 24 31 36 32z" fill="#8fb3a8" fillOpacity="0.800" />
        </WatermarkLogo>
        <WatermarkName>野火论坛</WatermarkName>
        <WatermarkUrl>www.proewildfire.cn</WatermarkUrl>
      </Watermark>
    </Window>
  );
}
